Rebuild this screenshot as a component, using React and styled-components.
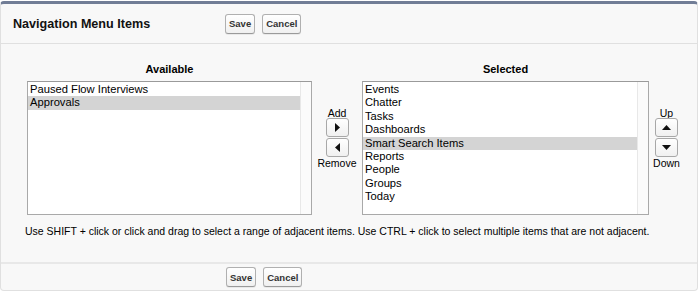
import React from 'react';
import styled, { createGlobalStyle } from 'styled-components';

const GlobalStyle = createGlobalStyle`
  html, body {
    margin: 0;
    padding: 0;
    background: #ffffff;
    font-family: "Liberation Sans", Arial, Helvetica, sans-serif;
    color: #000;
  }
`;

const Panel = styled.div`
  margin: 1px 2px 0 0;
  background: #f8f8f8;
  border: 1px solid #e0e0e0;
  border-top: 3px solid #717d96;
  border-radius: 4px;
  height: 286px;
  display: flex;
  flex-direction: column;
`;

const Header = styled.div`
  display: grid;
  grid-template-columns: 212px auto;
  align-items: center;
  height: 39px;
  padding-left: 12px;
  border-bottom: 1px solid #e0e0e0;
`;

const Title = styled.h2`
  margin: 0;
  font-size: 12.6px;
  font-weight: bold;
  color: #111;
`;

const ButtonRow = styled.div`
  display: flex;
  gap: 7px;
`;

const Btn = styled.button`
  height: 20px;
  padding: 0 3px;
  font-family: "Liberation Sans", Arial, sans-serif;
  font-size: 9.5px;
  font-weight: bold;
  color: #333;
  background: linear-gradient(#ffffff, #f0f0f0);
  border: 1px solid #b0b0b0;
  border-bottom-color: #9a9a9a;
  border-radius: 3px;
  box-shadow: 0 1px 0 rgba(0, 0, 0, 0.06);
`;

const Body = styled.div`
  height: 218px;
  box-sizing: border-box;
  padding: 19px 0 0 26px;
`;

const Duel = styled.div`
  display: grid;
  grid-template-columns: 285px 50px 287px 50px;
  grid-template-rows: 13px 134px;
  row-gap: 5px;
`;

const ColLabel = styled.div`
  font-size: 11px;
  font-weight: bold;
  text-align: center;
  line-height: 13px;
`;

const ListBox = styled.div`
  display: flex;
  background: #fff;
  border: 1px solid #a9a9a9;
  border-top-color: #9a9a9a;
`;

const Options = styled.div`
  flex: 1;
  padding-top: 1px;
`;

const Gutter = styled.div`
  width: 10px;
  border-left: 1px solid #e8e8e8;
  background: #fbfbfb;
`;

const Option = styled.div`
  font-size: 11.2px;
  line-height: 13.4px;
  height: 13.4px;
  padding-left: 2px;
  white-space: nowrap;
  background: ${({ $selected }) => ($selected ? '#d4d4d4' : 'transparent')};
`;

const ArrowCol = styled.div`
  display: flex;
  flex-direction: column;
  align-items: center;
  padding-top: 28px;
  padding-right: ${({ $shift }) => $shift || 0}px;
`;

const ArrowLabel = styled.div`
  font-size: 10.5px;
  line-height: 9px;
  height: 9px;
  color: #000;
  margin-top: ${({ $bottom }) => ($bottom ? 2 : 0)}px;
`;

const ArrowBtn = styled.button`
  width: 23px;
  height: 19px;
  margin-top: ${({ $gap }) => $gap || 0}px;
  padding: 0;
  display: flex;
  align-items: center;
  justify-content: center;
  background: linear-gradient(#ffffff, #f0f0f0);
  border: 1px solid #a8a8a8;
  border-radius: 3px;
`;

const Help = styled.p`
  margin: 10px 0 0 -2px;
  font-size: 10.5px;
  line-height: 12px;
  color: #000;
`;

const Footer = styled.div`
  flex: 1;
  display: flex;
  align-items: center;
  padding-left: 225px;
  border-top: 2px solid #e8e8e8;
`;

const Tri = ({ dir }) => {
  const pts = {
    right: '1,0 6,4.5 1,9',
    left: '6,0 1,4.5 6,9',
    up: '0,6 4.5,1 9,6',
    down: '0,1 4.5,6 9,1',
  }[dir];
  const vertical = dir === 'up' || dir === 'down';
  return (
    <svg width={vertical ? 9 : 7} height={vertical ? 7 : 9} viewBox={vertical ? '0 0 9 7' : '0 0 7 9'}>
      <polygon points={pts} fill="#111" />
    </svg>
  );
};

const available = ['Paused Flow Interviews', 'Approvals'];
const selected = ['Events', 'Chatter', 'Tasks', 'Dashboards', 'Smart Search Items', 'Reports', 'People', 'Groups', 'Today'];

const List = ({ items, active }) => (
  <ListBox>
    <Options>
      {items.map((it) => (
        <Option key={it} $selected={it === active}>{it}</Option>
      ))}
    </Options>
    <Gutter />
  </ListBox>
);

const App = () => (
  <>
    <GlobalStyle />
    <Panel>
      <Header>
        <Title>Navigation Menu Items</Title>
        <ButtonRow>
          <Btn>Save</Btn>
          <Btn>Cancel</Btn>
        </ButtonRow>
      </Header>
      <Body>
        <Duel>
          <ColLabel>Available</ColLabel>
          <div />
          <ColLabel>Selected</ColLabel>
          <div />
          <List items={available} active="Approvals" />
          <ArrowCol>
            <ArrowLabel>Add</ArrowLabel>
            <ArrowBtn><Tri dir="right" /></ArrowBtn>
            <ArrowBtn $gap={1}><Tri dir="left" /></ArrowBtn>
            <ArrowLabel $bottom>Remove</ArrowLabel>
          </ArrowCol>
          <List items={selected} active="Smart Search Items" />
          <ArrowCol $shift={15}>
            <ArrowLabel>Up</ArrowLabel>
            <ArrowBtn><Tri dir="up" /></ArrowBtn>
            <ArrowBtn $gap={1}><Tri dir="down" /></ArrowBtn>
            <ArrowLabel $bottom>Down</ArrowLabel>
          </ArrowCol>
        </Duel>
        <Help>
          Use SHIFT + click or click and drag to select a range of adjacent items. Use CTRL + click to select multiple items that are not adjacent.
        </Help>
      </Body>
      <Footer>
        <ButtonRow>
          <Btn>Save</Btn>
          <Btn>Cancel</Btn>
        </ButtonRow>
      </Footer>
    </Panel>
  </>
);

export default App;
